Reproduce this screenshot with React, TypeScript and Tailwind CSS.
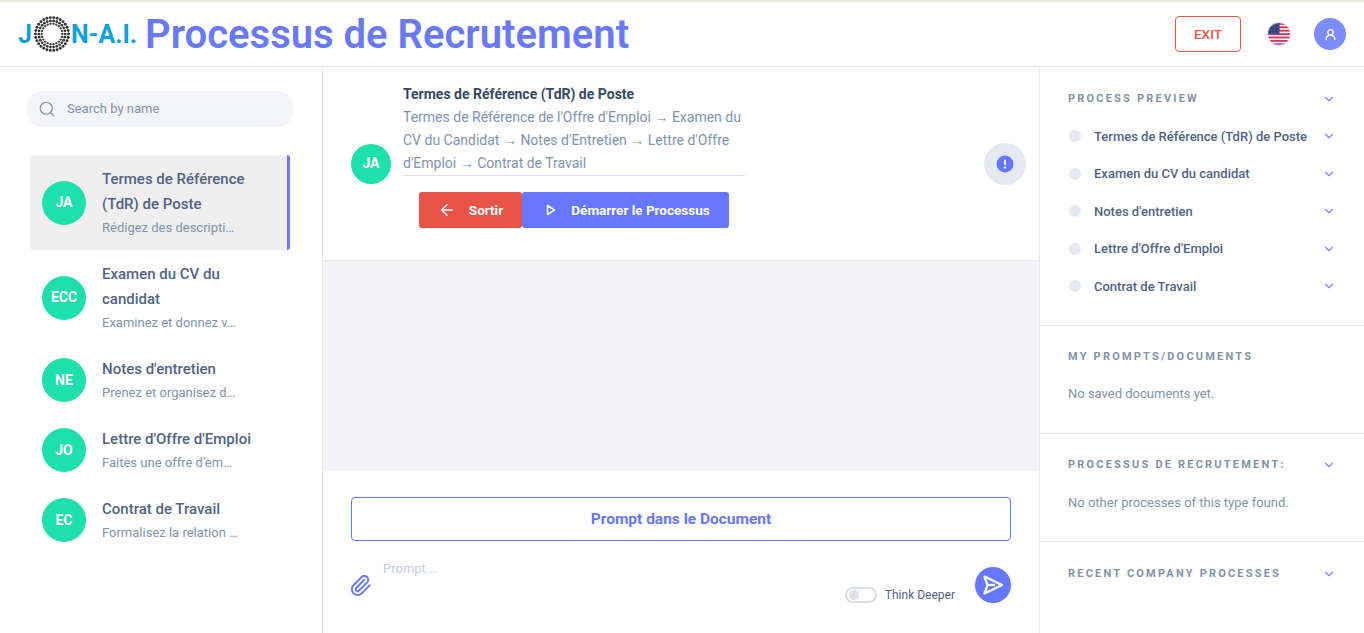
import { ArrowLeft, ChevronDown, Paperclip, Search, UserRound } from "lucide-react";

const font = "font-['Roboto','Liberation_Sans',sans-serif]";

const processes = [
  { initials: "JA", title: "Termes de Référence (TdR) de Poste", sub: "Rédigez des descripti…", active: true },
  { initials: "ECC", title: "Examen du CV du candidat", sub: "Examinez et donnez v…" },
  { initials: "NE", title: "Notes d'entretien", sub: "Prenez et organisez d…" },
  { initials: "JO", title: "Lettre d'Offre d'Emploi", sub: "Faites une offre d'em…" },
  { initials: "EC", title: "Contrat de Travail", sub: "Formalisez la relation …" },
];

const preview = [
  "Termes de Référence (TdR) de Poste",
  "Examen du CV du candidat",
  "Notes d'entretien",
  "Lettre d'Offre d'Emploi",
  "Contrat de Travail",
];

function Ring() {
  const dots: { x: number; y: number; r: number }[] = [];
  [
    { radius: 16.5, count: 30, r: 1.45 },
    { radius: 13.2, count: 26, r: 1.35 },
    { radius: 10.3, count: 22, r: 1.15 },
  ].forEach((ring) => {
    for (let i = 0; i < ring.count; i++) {
      const a = (i / ring.count) * Math.PI * 2;
      dots.push({ x: 18 + Math.cos(a) * ring.radius, y: 18 + Math.sin(a) * ring.radius, r: ring.r });
    }
  });
  return (
    <svg width="36" height="36" viewBox="0 0 36 36" className="shrink-0">
      {dots.map((d, i) => (
        <circle key={i} cx={d.x} cy={d.y} r={d.r} fill="#333333" />
      ))}
    </svg>
  );
}

function Flag() {
  const stripes = [0, 1, 2, 3, 4, 5, 6];
  return (
    <svg width="24" height="24" viewBox="0 0 24 24">
      <defs>
        <clipPath id="flag-clip">
          <circle cx="12" cy="12" r="11.5" />
        </clipPath>
      </defs>
      <g clipPath="url(#flag-clip)">
        <rect width="24" height="24" fill="#f5f5f7" />
        {stripes.map((s) => (
          <rect key={s} y={1 + s * 3.4} width="24" height="1.8" fill="#d8345a" />
        ))}
        <rect width="12.5" height="12" fill="#2f3f7f" />
        {[2, 5, 8, 11].map((x) =>
          [2, 5, 8, 11].map((y) => <circle key={`${x}-${y}`} cx={x} cy={y} r="0.55" fill="#8d97c4" />),
        )}
      </g>
      <circle cx="12" cy="12" r="11.5" fill="none" stroke="#e6e8f0" strokeWidth="1" />
    </svg>
  );
}

function SectionTitle({ label, chevron }: { label: string; chevron?: boolean }) {
  return (
    <div className="flex items-center justify-between pr-[28px]">
      <span className="text-[11px] leading-[14px] font-bold tracking-[0.2em] text-[#8492a6]">{label}</span>
      {chevron && <ChevronDown className="size-[14px] text-[#7b88f5]" strokeWidth={2} />}
    </div>
  );
}

export default function App() {
  return (
    <div className={`${font} flex h-screen flex-col overflow-hidden bg-white`}>
      <header className="flex h-[67px] shrink-0 items-center justify-between border-t-2 border-b border-t-[#e9e9dd] border-b-[#e2e7f0] pr-[18px] pl-[18px]">
        <div className="flex items-center">
          <span className="flex items-center leading-none font-bold text-[#0f9fdc]">
            <span className="text-[25px]">J</span>
            <span className="ml-[2px] flex">
              <Ring />
            </span>
            <span className="ml-[1px] text-[25px] font-bold">N-A.I.</span>
          </span>
          <h1 className="ml-[8px] pt-[2px] text-[40px] leading-none font-semibold text-[#6979f8]">Processus de Recrutement</h1>
        </div>
        <div className="flex items-center">
          <button className="flex h-[36px] w-[66px] items-center justify-center rounded-[4px] border border-[#e8534a] text-[13.5px] font-medium text-[#e8534a]">
            EXIT
          </button>
          <span className="mr-[23px] ml-[26px] flex">
            <Flag />
          </span>
          <span className="flex size-[32px] items-center justify-center rounded-full bg-[#7b8cff]">
            <UserRound className="size-[13px] text-white" strokeWidth={2.4} />
          </span>
        </div>
      </header>

      <div className="flex min-h-0 flex-1">
        <aside className="w-[323px] shrink-0 border-r border-[#e2e7f0] pt-[24px]">
          <div className="ml-[26px] flex h-[36px] w-[268px] items-center rounded-full bg-[#f3f5fa] pl-[12px]">
            <Search className="size-[18px] text-[#7f93ad]" strokeWidth={1.6} />
            <span className="ml-[11px] text-[13px] text-[#8492a6]">Search by name</span>
          </div>
          <ul className="mt-[28px] ml-[30px] w-[260px]">
            {processes.map((p) => (
              <li
                key={p.initials}
                className={`flex items-center gap-[16px] rounded-[3px] py-[12px] pl-[12px] ${
                  p.active ? "border-r-[3px] border-[#6979f8] bg-[#efefef]" : ""
                }`}
              >
                <span className="flex size-[44px] shrink-0 items-center justify-center rounded-full bg-[#1ee0ac] text-[14px] font-bold text-white">
                  {p.initials}
                </span>
                <div className="w-[156px]">
                  <div className="text-[15px] leading-[25px] font-medium text-[#526484]">{p.title}</div>
                  <div className="pt-[1px] text-[13px] leading-[20px] text-[#8094ae]">{p.sub}</div>
                </div>
              </li>
            ))}
          </ul>
        </aside>

        <main className="flex min-w-0 flex-1 flex-col">
          <section className="flex h-[194px] shrink-0 items-center justify-between border-b border-[#e2e7f0] pr-[13px] pl-[28px]">
            <div className="flex items-center gap-[12px]">
              <span className="flex size-[40px] shrink-0 items-center justify-center rounded-full bg-[#1ee0ac] text-[14px] font-bold text-white">
                JA
              </span>
              <div className="w-[342px] pt-[1px] pb-[17px]">
                <div className="text-[14px] leading-[23px] font-bold text-[#364a63]">Termes de Référence (TdR) de Poste</div>
                <p className="border-b border-[#dddfee] text-[14px] leading-[23px] text-[#8094ae]">
                  Termes de Référence de l'Offre d'Emploi → Examen du CV du Candidat → Notes d'Entretien → Lettre d'Offre
                  d'Emploi → Contrat de Travail
                </p>
                <div className="mt-[16px] flex justify-center">
                  <button className="flex h-[36px] w-[103px] items-center justify-center gap-[13px] rounded-[3px] bg-[#e85347] text-[13.5px] font-bold text-white">
                    <ArrowLeft className="size-[18px]" strokeWidth={2} />
                    Sortir
                  </button>
                  <button className="flex h-[36px] w-[207px] items-center justify-center gap-[15px] rounded-[3px] bg-[#6576ff] pl-[5px] text-[13.5px] font-bold text-white">
                    <svg width="10" height="12" viewBox="0 0 10 12" fill="none" stroke="currentColor" strokeWidth="1.6">
                      <path d="M1.5 1.5 8.5 6l-7 4.5z" strokeLinejoin="round" />
                    </svg>
                    Démarrer le Processus
                  </button>
                </div>
              </div>
            </div>
            <span className="flex size-[42px] items-center justify-center rounded-full bg-[#e5e9f2]">
              <svg width="18" height="18" viewBox="0 0 18 18">
                <circle cx="9" cy="9" r="8.5" fill="#6576ff" />
                <rect x="8.1" y="4.6" width="1.8" height="5.6" rx="0.9" fill="#fff" />
                <circle cx="9" cy="12.6" r="1.05" fill="#fff" />
              </svg>
            </span>
          </section>

          <div className="h-[210px] shrink-0 bg-[#f4f4f6]" />

          <section className="flex-1 px-[28px] pt-[26px]">
            <button className="h-[44px] w-full rounded-[4px] border border-[#6576ff] pt-[1px] text-[15.5px] font-bold text-[#6576ff]">
              Prompt dans le Document
            </button>
            <div className="mt-[18px] flex">
              <Paperclip className="mt-[15px] -ml-[2px] size-[23px] text-[#6576ff]" strokeWidth={2} />
              <span className="ml-[11px] pt-[1px] text-[13px] leading-[18px] text-[#c3cbe2]">Prompt...</span>
              <div className="mt-[8px] ml-auto flex items-end">
                <span className="flex h-[16px] w-[32px] items-center rounded-full border-2 border-[#dbdfea] bg-white pl-[2px]">
                  <span className="size-[10px] rounded-full bg-[#dbdfea]" />
                </span>
                <span className="ml-[8px] pb-[1px] text-[12px] leading-[14px] text-[#526484]">Think Deeper</span>
                <span className="ml-[20px] flex size-[36px] items-center justify-center rounded-full bg-[#6576ff]">
                  <svg width="24" height="24" viewBox="0 0 24 24" fill="none">
                    <path d="M3.5 3.5 21 12 3.5 20.5 6.5 12z" stroke="#fff" strokeWidth="2.3" strokeLinejoin="round" />
                    <path d="M6.5 12H14" stroke="#fff" strokeWidth="2.3" />
                  </svg>
                </span>
              </div>
            </div>
          </section>
        </main>

        <aside className="w-[325px] shrink-0 border-l border-[#e2e7f0]">
          <div className="h-[259px] border-b border-[#e2e7f0] pt-[25px] pl-[28px]">
            <SectionTitle label="PROCESS PREVIEW" chevron />
            <ul className="mt-[11.7px]">
              {preview.map((item) => (
                <li key={item} className="flex h-[37.5px] items-center pr-[28px]">
                  <span className="ml-[1px] size-[12px] rounded-full bg-[#e5e9f2]" />
                  <span className="ml-[13px] flex-1 text-[13px] font-medium text-[#526484]">{item}</span>
                  <ChevronDown className="size-[14px] text-[#7b88f5]" strokeWidth={2} />
                </li>
              ))}
            </ul>
          </div>
          <div className="h-[108px] border-b border-[#e2e7f0] pt-[24px] pl-[28px]">
            <SectionTitle label="MY PROMPTS/DOCUMENTS" />
            <p className="mt-[20px] text-[13px] leading-[20px] text-[#8094ae]">No saved documents yet.</p>
          </div>
          <div className="h-[108px] border-b border-[#e2e7f0] pt-[24px] pl-[28px]">
            <SectionTitle label="PROCESSUS DE RECRUTEMENT:" chevron />
            <p className="mt-[21px] text-[13px] leading-[20px] text-[#8094ae]">No other processes of this type found.</p>
          </div>
          <div className="pt-[25px] pl-[28px]">
            <SectionTitle label="RECENT COMPANY PROCESSES" chevron />
          </div>
        </aside>
      </div>
    </div>
  );
}
